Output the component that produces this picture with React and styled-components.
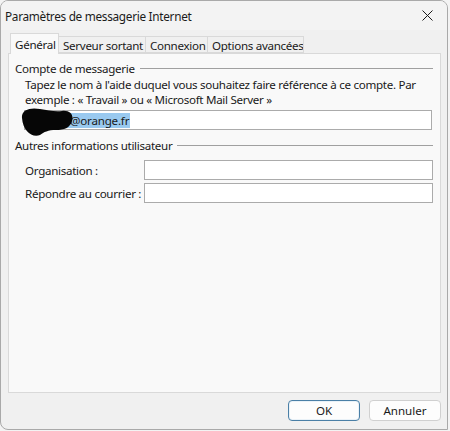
import React from "react";
import styled, { createGlobalStyle } from "styled-components";

const Global = createGlobalStyle`
  html, body { margin: 0; padding: 0; background: #f3f3f3; }
  body { font-family: "Noto Sans", "Open Sans", sans-serif; font-size: 11.6px; color: #1a1a1a; }
  * { box-sizing: border-box; }
`;

const Window = styled.div`
  width: 448px;
  height: 430px;
  background: #f0f0f0;
  border: 1px solid #a9a9a9;
  border-radius: 8px 8px 0 8px;
  display: flex;
  flex-direction: column;
  overflow: hidden;
`;

const TitleBar = styled.div`
  height: 29px;
  display: flex;
  align-items: center;
  justify-content: space-between;
  padding: 0 8px 0 4px;
  background: #f3f3f3;
`;

const Title = styled.span`
  font-size: 11.8px;
  letter-spacing: -0.3px;
  color: #1b1b1b;
`;

const CloseBtn = styled.button`
  width: 24px;
  height: 22px;
  border: none;
  background: transparent;
  display: flex;
  align-items: center;
  justify-content: center;
  padding: 0;
`;

const Body = styled.div`
  flex: 1;
  display: flex;
  flex-direction: column;
  padding: 0 6px 0 7px;
`;

const TabStrip = styled.div`
  display: flex;
  align-items: flex-end;
  height: 23px;
  padding-left: 2px;
  position: relative;
  z-index: 1;
`;

const Tab = styled.div`
  width: ${(p) => p.$w}px;
  flex-shrink: 0;
  height: ${(p) => (p.$active ? 21 : 17)}px;
  margin-bottom: ${(p) => (p.$active ? -1 : 0)}px;
  padding-left: 4px;
  display: flex;
  align-items: center;
  background: ${(p) => (p.$active ? "#f9f9f9" : "#f0f0f0")};
  border: 1px solid #d9d9d9;
  border-bottom: ${(p) => (p.$active ? "none" : "1px solid #d9d9d9")};
  margin-left: ${(p) => (p.$first ? 0 : -1)}px;
  letter-spacing: -0.3px;
  white-space: nowrap;
  overflow: hidden;
  color: #1a1a1a;
  padding-top: ${(p) => (p.$active ? 0 : 1)}px;
`;

const Panel = styled.div`
  height: 340px;
  background: #f9f9f9;
  border: 1px solid #d9d9d9;
  padding: 6px 0 0 6px;
  display: flex;
  flex-direction: column;
`;

const GroupHeader = styled.div`
  display: flex;
  align-items: center;
  gap: 5px;
  height: 16px;
  margin-top: ${(p) => p.$mt || 0}px;
  color: #1a1a1a;
  letter-spacing: -0.3px;
  white-space: nowrap;
  &::after {
    content: "";
    flex: 1;
    height: 1px;
    background: #a0a0a0;
    margin-right: 7px;
  }
`;

const GroupBody = styled.div`
  padding: 1px 7px 0 9px;
  display: flex;
  flex-direction: column;
`;

const Desc = styled.p`
  margin: 0 0 0 1px;
  line-height: 15px;
  letter-spacing: -0.3px;
  white-space: nowrap;
`;

const Field = styled.div`
  position: relative;
  height: 20px;
  width: ${(p) => p.$w}px;
  flex-shrink: 0;
  background: #ffffff;
  border: 1px solid #ababab;
  display: flex;
  align-items: center;
  padding-left: 1px;
  margin-top: ${(p) => p.$mt || 0}px;
`;

const Selected = styled.span`
  background: #99c9ef;
  color: #1a1a1a;
  padding: 0 1px 0 44px;
  line-height: 15px;
  letter-spacing: -0.2px;
`;

const Blob = styled.svg`
  position: absolute;
  left: -7px;
  top: -5px;
`;

const Row = styled.div`
  display: flex;
  align-items: center;
  justify-content: space-between;
  margin-top: ${(p) => p.$mt || 0}px;
`;

const Label = styled.span`
  padding-left: 1px;
  letter-spacing: -0.3px;
  white-space: nowrap;
`;

const Footer = styled.div`
  display: flex;
  justify-content: flex-end;
  gap: 9px;
  padding: 7px 0 0 0;
`;

const Button = styled.button`
  width: 72px;
  height: 21px;
  border-radius: 4px;
  font-family: inherit;
  font-size: 11.6px;
  color: #1a1a1a;
  background: #fdfdfd;
  border: 1px solid ${(p) => (p.$primary ? "#4a7fa6" : "#d0d0d0")};
  box-shadow: ${(p) => (p.$primary ? "inset 0 0 0 1px #eaf2f8" : "none")};
  padding: 0;
`;

export default function App() {
  return (
    <>
      <Global />
      <Window>
        <TitleBar>
          <Title>Paramètres de messagerie Internet</Title>
          <CloseBtn aria-label="Fermer">
            <svg width="11" height="11" viewBox="0 0 11 11">
              <path d="M0.5 0.5 L10.5 10.5 M10.5 0.5 L0.5 10.5" stroke="#1a1a1a" strokeWidth="1" />
            </svg>
          </CloseBtn>
        </TitleBar>
        <Body>
          <TabStrip>
            <Tab $active $first $w={49}>Général</Tab>
            <Tab $w={88}>Serveur sortant</Tab>
            <Tab $w={63}>Connexion</Tab>
            <Tab $w={97}>Options avancées</Tab>
          </TabStrip>
          <Panel>
            <GroupHeader>Compte de messagerie</GroupHeader>
            <GroupBody>
              <Desc>
                Tapez le nom à l'aide duquel vous souhaitez faire référence à ce compte. Par
                <br />
                exemple : « Travail » ou « Microsoft Mail Server »
              </Desc>
              <Field $w={408} $mt={3}>
                <Selected>@orange.fr</Selected>
                <Blob width="58" height="31" viewBox="0 0 58 31">
                  <path
                    d="M4 12 C3 4 12 1 22 3 C30 4 36 6 44 5 C52 4 56 9 54 15 C52 22 46 24 38 24 C30 24 26 26 22 29 C14 32 5 25 4 12 Z"
                    fill="#060606"
                  />
                </Blob>
              </Field>
            </GroupBody>
            <GroupHeader $mt={7}>Autres informations utilisateur</GroupHeader>
            <GroupBody>
              <Row $mt={6}>
                <Label>Organisation :</Label>
                <Field $w={289} />
              </Row>
              <Row $mt={3}>
                <Label>Répondre au courrier :</Label>
                <Field $w={289} />
              </Row>
            </GroupBody>
          </Panel>
          <Footer>
            <Button $primary>OK</Button>
            <Button>Annuler</Button>
          </Footer>
        </Body>
      </Window>
    </>
  );
}
